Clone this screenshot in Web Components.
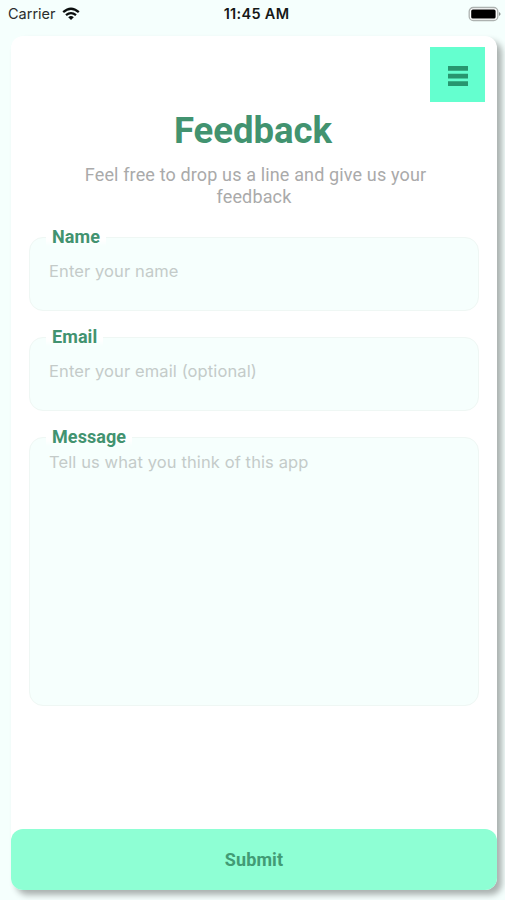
<!DOCTYPE html>
<html lang="en">
<head>
<meta charset="utf-8">
<title>Feedback</title>
<style>
html,body{margin:0;height:100%;overflow:hidden;background:#fff}
</style>
</head>
<body>
<feedback-screen></feedback-screen>
<script>
const define = (name, html) => customElements.define(name, class extends HTMLElement {
  constructor() {
    super();
    this.attachShadow({mode: 'open'}).innerHTML = html;
  }
});

define('status-bar', `<style>
:host{display:grid;grid-template-columns:1fr auto 1fr;align-items:center;height:28px;padding:0 4px 0 8px;font:14.5px/28px Inter,"Liberation Sans",sans-serif;color:#2a2d2c}
.left{display:flex;align-items:center;gap:6px}
.carrier{letter-spacing:0}
.time{font-weight:600;font-size:14.5px;color:#151817;letter-spacing:.3px;padding-left:4px}
.battery{justify-self:end;display:block}
svg{display:block}
</style>
<div class="left"><span class="carrier">Carrier</span>
<svg width="18" height="14" viewBox="0 0 18 14" fill="none" stroke="#0b0f0e" stroke-width="2.3"><path d="M1.2 5.2Q9-1.8 16.8 5.2"/><path d="M4 8.2Q9 4 14 8.2"/><path d="M9 13L6.2 10.2Q9 8 11.8 10.2Z" fill="#0b0f0e" stroke="none"/></svg></div>
<span class="time">11:45 AM</span>
<svg class="battery" width="33" height="16" viewBox="0 0 33 16"><rect x="1.2" y="1.5" width="28.6" height="13" rx="4" fill="#fff" stroke="#adb2b0" stroke-width="1.3"/><rect x="3.2" y="3.5" width="24.4" height="9" rx="1.6" fill="#000"/><path d="M31 6v4q1.6-.8 1.6-2T31 6Z" fill="#8d9391"/></svg>`);

define('menu-button', `<style>
:host{display:grid;place-items:center;width:55px;height:55px;background:#64ffcf}
svg{display:block;margin:2px 0 0 1px}
</style>
<svg width="20" height="20" viewBox="0 0 20 20" fill="#27966f"><path d="M0 0h20v4.7H0zM0 7.7h20v4.7H0zM0 15.3h20v4.7H0z"/></svg>`);

define('form-field', `<style>
:host{display:block;box-sizing:border-box;height:74px;border:1px solid #eff7f4;border-radius:14px;background:#f6fffd;padding:0 19px}
.label{display:block;width:max-content;height:20px;margin-top:-11px;margin-left:-3px;padding:0 6px;font:700 18px/20px Roboto,sans-serif;letter-spacing:.08px;color:#429370;background:linear-gradient(#fff 0 13px,transparent 19px)}
.placeholder{display:block;margin-top:14px;font:16.5px/20px Inter,sans-serif;letter-spacing:.11px;color:#c4cbc9}
:host([multiline]){height:269px}
:host([multiline]) .placeholder{margin-top:5px}
</style>
<span class="label"><slot name="label"></slot></span><span class="placeholder"><slot></slot></span>`);

define('submit-button', `<style>
:host{display:grid;place-items:center;height:61px;border-radius:12px;background:#8effd4;font:700 18px/20px Roboto,sans-serif;letter-spacing:.1px;color:#429b75}
</style><slot></slot>`);

define('feedback-card', `<style>
:host{display:flex;flex-direction:column;box-sizing:border-box;width:486px;height:854px;margin:8px 0 0 11px;border-radius:12px;background:#fff;box-shadow:5px 5px 6px rgba(0,0,0,.31)}
.top{display:flex;justify-content:flex-end;padding:11px 12px 0 0}
h1{margin:7px 0 0;padding-right:2px;text-align:center;font:700 36.5px/44px Roboto,sans-serif;color:#429370}
p{margin:11px 58px 0 58px;text-align:center;text-indent:3px;font:18px/21.5px Roboto,sans-serif;letter-spacing:.14px;color:#aaa}
.fields{display:flex;flex-direction:column;gap:26px;padding:0 18px;margin-top:30px}
submit-button{margin-top:auto}
</style>
<div class="top"><menu-button></menu-button></div>
<h1>Feedback</h1>
<p>Feel free to drop us a line and give us your feedback</p>
<div class="fields">
<form-field><span slot="label">Name</span>Enter your name</form-field>
<form-field><span slot="label">Email</span>Enter your email (optional)</form-field>
<form-field multiline><span slot="label">Message</span>Tell us what you think of this app</form-field>
</div>
<submit-button>Submit</submit-button>`);

define('feedback-screen', `<style>
:host{display:block;width:505px;height:900px;overflow:hidden;background:#f5fffd}
</style><status-bar></status-bar><feedback-card></feedback-card>`);
</script>
</body>
</html>
